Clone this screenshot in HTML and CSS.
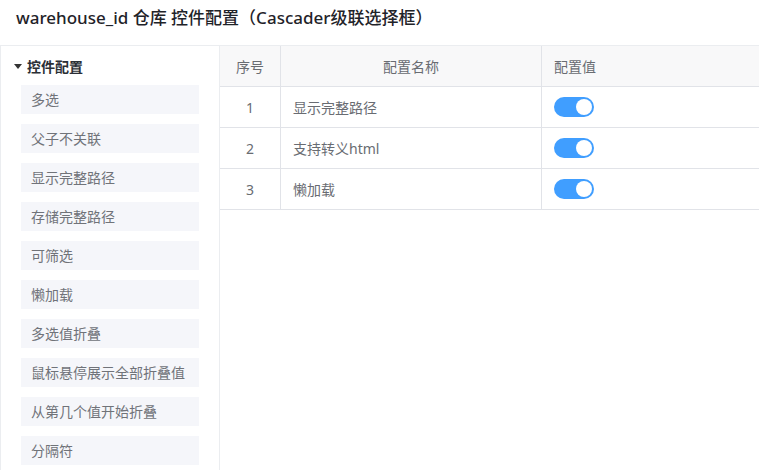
FILE: index.html
```html
<!DOCTYPE html>
<html lang="zh-CN">
<head>
<meta charset="utf-8">
<title>warehouse_id 控件配置</title>
<link rel="stylesheet" href="styles.css">
</head>
<body>
<div class="title">warehouse_id 仓库 控件配置（Cascader级联选择框）</div>
<div class="main">
  <aside class="sidebar">
    <div class="group-head"><span class="caret"></span><span>控件配置</span></div>
    <ul class="items">
      <li class="item">多选</li>
      <li class="item">父子不关联</li>
      <li class="item">显示完整路径</li>
      <li class="item">存储完整路径</li>
      <li class="item">可筛选</li>
      <li class="item">懒加载</li>
      <li class="item">多选值折叠</li>
      <li class="item">鼠标悬停展示全部折叠值</li>
      <li class="item">从第几个值开始折叠</li>
      <li class="item">分隔符</li>
    </ul>
  </aside>
  <section class="content">
    <div class="table">
      <div class="row head">
        <div class="cell c-idx">序号</div>
        <div class="cell c-name center">配置名称</div>
        <div class="cell c-val">配置值</div>
      </div>
      <div class="row">
        <div class="cell c-idx">1</div>
        <div class="cell c-name">显示完整路径</div>
        <div class="cell c-val"><span class="switch on"><span class="knob"></span></span></div>
      </div>
      <div class="row">
        <div class="cell c-idx">2</div>
        <div class="cell c-name">支持转义html</div>
        <div class="cell c-val"><span class="switch on"><span class="knob"></span></span></div>
      </div>
      <div class="row">
        <div class="cell c-idx">3</div>
        <div class="cell c-name">懒加载</div>
        <div class="cell c-val"><span class="switch on"><span class="knob"></span></span></div>
      </div>
    </div>
  </section>
</div>
</body>
</html>
```

FILE: styles.css
```css
* { box-sizing: border-box; }
html, body { margin: 0; padding: 0; background: #fff; }
body {
  font-family: "Noto Sans", "Noto Sans CJK SC", sans-serif;
  color: #515a6e;
  font-size: 14px;
  overflow: hidden;
  height: 470px;
}
.title {
  height: 45px;
  padding: 6px 16px 0;
  line-height: 24px;
  font-size: 17px;
  font-weight: 500;
  color: #1f2329;
}
.main {
  display: flex;
  border-top: 1px solid #ebedf0;
  height: 425px;
}
.sidebar {
  width: 220px;
  flex: none;
  border-left: 1px solid #ebedf0;
  border-right: 1px solid #ebedf0;
}
.group-head {
  display: flex;
  align-items: center;
  height: 20px;
  margin-top: 10px;
  padding-left: 13px;
  font-weight: 700;
  color: #2b2f36;
  font-size: 14px;
}
.caret {
  width: 0; height: 0;
  border-left: 4px solid transparent;
  border-right: 4px solid transparent;
  border-top: 5px solid #333;
  margin-right: 5px;
}
.items {
  list-style: none;
  margin: 9px 0 0;
  padding: 0 0 0 20px;
  display: flex;
  flex-direction: column;
  gap: 10px;
}
.item {
  width: 178px;
  height: 29px;
  line-height: 29px;
  padding-left: 10px;
  background: #f5f6fa;
  color: #707379;
  font-size: 14px;
  white-space: nowrap;
}
.content { flex: 1; min-width: 0; }
.table { width: 100%; }
.row {
  display: flex;
  height: 41px;
  border-bottom: 1px solid #e1e3e8;
}
.row.head { background: #f8f8f9; }
.cell {
  display: flex;
  align-items: center;
  padding: 0 12px;
  color: #696c72;
  font-size: 14px;
}
.c-idx {
  width: 61px;
  flex: none;
  justify-content: center;
  border-right: 1px solid #e1e3e8;
}
.c-name {
  width: 261px;
  flex: none;
  border-right: 1px solid #e1e3e8;
}
.c-name.center { justify-content: center; }
.c-val { flex: 1; }
.switch {
  position: relative;
  display: inline-block;
  width: 40px;
  height: 20px;
  border-radius: 10px;
  background: #409eff;
}
.knob {
  position: absolute;
  top: 2px;
  right: 2px;
  width: 16px;
  height: 16px;
  border-radius: 50%;
  background: #fff;
}
```
